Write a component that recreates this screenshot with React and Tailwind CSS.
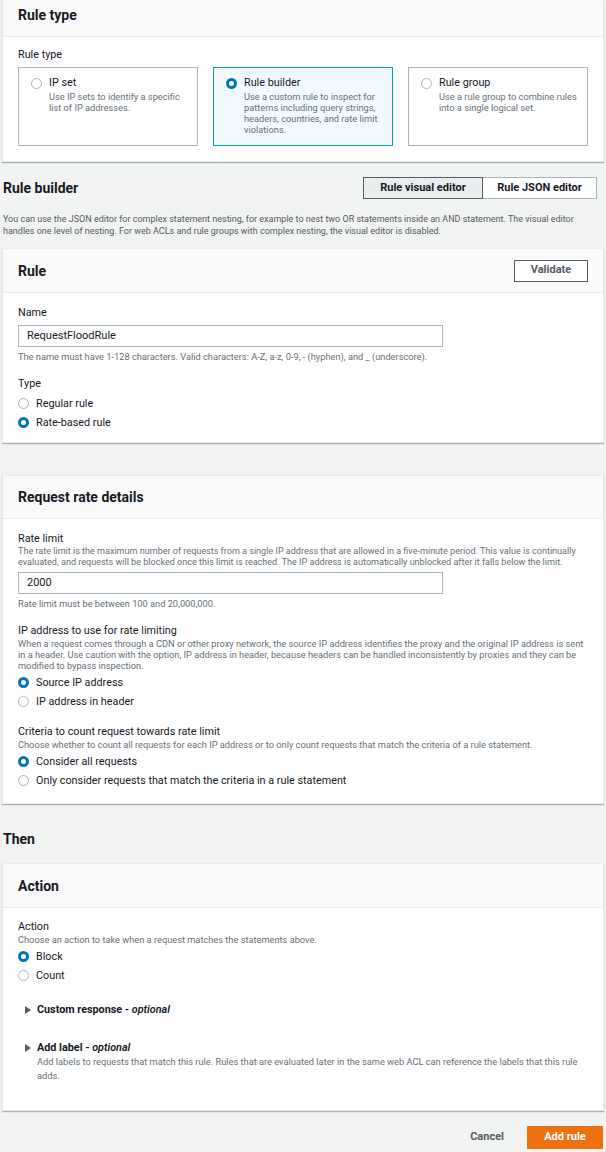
const Radio = ({ checked }) =>
  checked ? (
    <span className="block w-[11px] h-[11px] rounded-full border-[3.5px] border-[#0073bb] bg-white shrink-0 box-border" />
  ) : (
    <span className="block w-[11px] h-[11px] rounded-full border border-[#aab7b8] bg-white shrink-0 box-border" />
  )

const RadioRow = ({ checked, label }) => (
  <div className="flex items-center gap-[7px] h-[19px]">
    <Radio checked={checked} />
    <span className="text-[10.8px] leading-[14px] text-[#16191f]">{label}</span>
  </div>
)

const Label = ({ children, className = '' }) => (
  <div className={`text-[10.8px] leading-[14px] text-[#16191f] ${className}`}>{children}</div>
)

const Desc = ({ children, className = '', small }) => (
  <div className={`${small ? 'text-[9.05px]' : 'text-[9.25px]'} leading-[11px] text-[#687078] ${className}`}>
    {children}
  </div>
)

const Card = ({ title, action, children, bodyClass, headClass = 'h-[44px]', className = '' }) => (
  <div className={`bg-white mx-[2px] border border-[#eaeded] shadow-[0_1px_1px_0_rgba(0,28,36,0.3)] ${className}`}>
    <div className={`bg-[#fafafa] border-b border-[#eaeded] px-[15px] flex items-center justify-between ${headClass}`}>
      <h2 className="text-[14px] leading-[18px] font-bold text-[#16191f]">{title}</h2>
      {action}
    </div>
    <div className={`px-[15px] ${bodyClass}`}>{children}</div>
  </div>
)

const Tile = ({ checked, title, desc }) => (
  <div
    className={`h-[79px] border pl-[12px] pr-[10px] pt-[8px] flex gap-[7px] ${
      checked ? 'border-[#00a1c9] bg-[#f1faff]' : 'border-[#aab7b8] bg-white'
    }`}
  >
    <div className="pt-[2px] shrink-0">
      <Radio checked={checked} />
    </div>
    <div>
      <div className="text-[10.8px] leading-[14px] text-[#16191f]">{title}</div>
      <div className="text-[9.25px] leading-[11px] text-[#687078] mt-[0.5px]">{desc}</div>
    </div>
  </div>
)

const Expand = ({ title, children, className = '' }) => (
  <div className={`pl-[7px] ${className}`}>
    <div className="flex items-center gap-[6px]">
      <span className="w-0 h-0 border-y-[4px] border-y-transparent border-l-[6px] border-l-[#545b64]" />
      <span className="text-[10.8px] leading-[14px] font-bold text-[#16191f]">
        {title} - <i className="font-semibold">optional</i>
      </span>
    </div>
    {children}
  </div>
)

export default function App() {
  return (
    <div
      className="bg-[#f2f3f3] min-h-[1152px] w-[606px] pb-[10px]"
      style={{ fontFamily: 'Roboto, "Noto Sans", sans-serif' }}
    >
      <Card
        title="Rule type"
        headClass="h-[37px] pb-[7px] -mt-[1px]"
        bodyClass="pt-[11px] pb-[15px]"
      >
        <Label>Rule type</Label>
        <div className="grid grid-cols-3 gap-[15px] mt-[5px]">
          <Tile title="IP set" desc="Use IP sets to identify a specific list of IP addresses." />
          <Tile
            checked
            title="Rule builder"
            desc="Use a custom rule to inspect for patterns including query strings, headers, countries, and rate limit violations."
          />
          <Tile title="Rule group" desc="Use a rule group to combine rules into a single logical set." />
        </div>
      </Card>

      <div className="flex items-center justify-between pl-[3px] pr-[9px] mt-[15px] h-[22px]">
        <h2 className="text-[14px] leading-[18px] font-bold text-[#16191f]">Rule builder</h2>
        <div className="flex">
          <button className="w-[120px] h-[22px] bg-[#eaeded] border border-[#545b64] text-[11px] font-bold text-[#16191f]">
            Rule visual editor
          </button>
          <button className="w-[114px] h-[22px] bg-white border border-l-0 border-[#aab7b8] text-[11px] font-bold text-[#16191f]">
            Rule JSON editor
          </button>
        </div>
      </div>
      <p className="text-[9px] leading-[12px] text-[#545b64] px-[3px] mt-[14px]">
        You can use the JSON editor for complex statement nesting, for example to nest two OR statements inside an AND
        statement. The visual editor handles one level of nesting. For web ACLs and rule groups with complex nesting, the
        visual editor is disabled.
      </p>

      <Card
        className="mt-[11px]"
        title="Rule"
        action={
          <button className="w-[74px] h-[22px] bg-white border border-[#545b64] text-[11px] font-bold text-[#545b64]">
            Validate
          </button>
        }
        bodyClass="pt-[13px] pb-[10px]"
      >
        <Label>Name</Label>
        <div className="mt-[5px] w-[425px] h-[22px] border border-[#aab7b8] px-[8px] flex items-center text-[11px] text-[#16191f]">
          RequestFloodRule
        </div>
        <Desc className="mt-[4px]">
          The name must have 1-128 characters. Valid characters: A-Z, a-z, 0-9, - (hyphen), and _ (underscore).
        </Desc>
        <Label className="mt-[15px]">Type</Label>
        <div className="mt-[3px]">
          <RadioRow label="Regular rule" />
          <RadioRow checked label="Rate-based rule" />
        </div>
      </Card>

      <Card className="mt-[32px]" title="Request rate details" headClass="h-[43px]" bodyClass="pt-[13px] pb-[13px]">
        <Label>Rate limit</Label>
        <Desc small>
          The rate limit is the maximum number of requests from a single IP address that are allowed in a five-minute
          period. This value is continually evaluated, and requests will be blocked once this limit is reached. The IP
          address is automatically unblocked after it falls below the limit.
        </Desc>
        <div className="mt-[4px] w-[425px] h-[22px] border border-[#aab7b8] px-[8px] flex items-center text-[11px] text-[#16191f]">
          2000
        </div>
        <Desc className="mt-[4px]">Rate limit must be between 100 and 20,000,000.</Desc>

        <Label className="mt-[15px]">IP address to use for rate limiting</Label>
        <Desc>
          When a request comes through a CDN or other proxy network, the source IP address identifies the proxy and the
          original IP address is sent in a header. Use caution with the option, IP address in header, because headers can
          be handled inconsistently by proxies and they can be modified to bypass inspection.
        </Desc>
        <div className="mt-[2px]">
          <RadioRow checked label="Source IP address" />
          <RadioRow label="IP address in header" />
        </div>

        <Label className="mt-[14px]">Criteria to count request towards rate limit</Label>
        <Desc>
          Choose whether to count all requests for each IP address or to only count requests that match the criteria of a
          rule statement.
        </Desc>
        <div className="mt-[2px]">
          <RadioRow checked label="Consider all requests" />
          <RadioRow label="Only consider requests that match the criteria in a rule statement" />
        </div>
      </Card>

      <h2 className="text-[14px] leading-[18px] font-bold text-[#16191f] px-[3px] mt-[26px]">Then</h2>

      <Card className="mt-[15px]" title="Action" bodyClass="pt-[12px] pb-[27px]">
        <Label>Action</Label>
        <Desc>Choose an action to take when a request matches the statements above.</Desc>
        <div className="mt-[2px]">
          <RadioRow checked label="Block" />
          <RadioRow label="Count" />
        </div>
        <Expand className="mt-[18px]" title="Custom response" />
        <Expand className="mt-[24px]" title="Add label">
          <p className="text-[9.25px] leading-[14px] text-[#687078] pl-[12px] max-w-[560px]">
            Add labels to requests that match this rule. Rules that are evaluated later in the same web ACL can reference
            the labels that this rule adds.
          </p>
        </Expand>
      </Card>

      <div className="flex justify-end items-center mt-[15px] pr-[3px] gap-[23px]">
        <button className="text-[11px] font-bold text-[#545b64]">Cancel</button>
        <button className="w-[76px] h-[23px] bg-[#ec7211] text-white text-[11px] font-bold">Add rule</button>
      </div>
    </div>
  )
}
